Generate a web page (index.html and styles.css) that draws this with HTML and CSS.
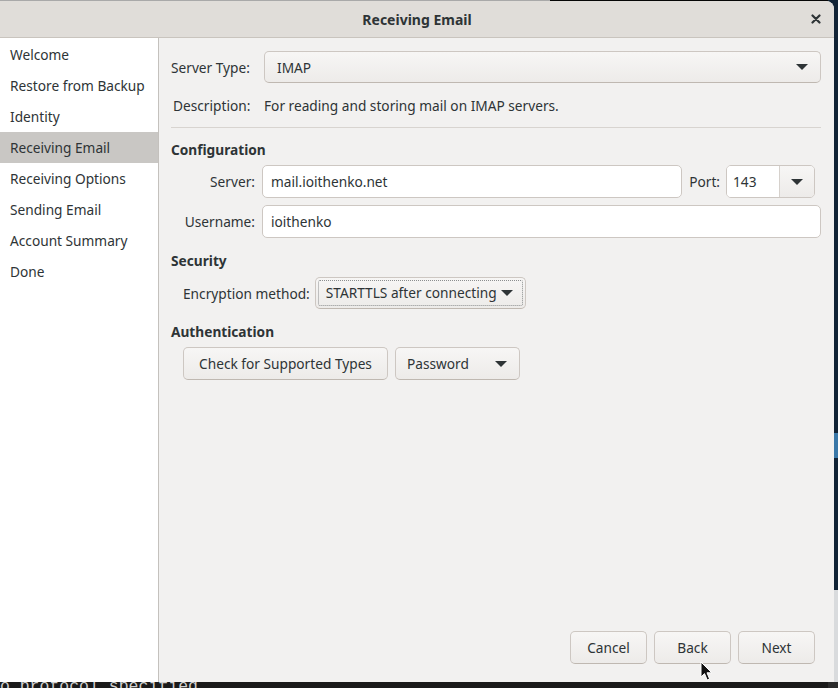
FILE: index.html
```html
<!DOCTYPE html>
<html>
<head>
<meta charset="utf-8">
<title>Receiving Email</title>
<link rel="stylesheet" href="styles.css">
</head>
<body>
<div class="desktop">
  <div class="side-strip"></div>
  <div class="terminal-text">No protocol specified</div>
  <div class="window">
    <header class="titlebar">
      <span class="title">Receiving Email</span>
      <span class="close">
        <svg width="10" height="10" viewBox="0 0 10 10"><path d="M1.5 1.5 L8.5 8.5 M8.5 1.5 L1.5 8.5" stroke="#2e3436" stroke-width="2.2" stroke-linecap="round"/></svg>
      </span>
    </header>
    <div class="main">
      <nav class="sidebar">
        <div class="nav-item">Welcome</div>
        <div class="nav-item">Restore from Backup</div>
        <div class="nav-item">Identity</div>
        <div class="nav-item selected">Receiving Email</div>
        <div class="nav-item">Receiving Options</div>
        <div class="nav-item">Sending Email</div>
        <div class="nav-item">Account Summary</div>
        <div class="nav-item">Done</div>
      </nav>
      <main class="content">
        <div class="row-type">
          <span class="top-label">Server Type:</span>
          <div class="btn combo combo-wide"><span>IMAP</span><span class="arrow"></span></div>
        </div>
        <div class="row-desc">
          <span class="top-label desc-label">Description:</span>
          <span>For reading and storing mail on IMAP servers.</span>
        </div>
        <div class="separator"></div>

        <div class="heading heading-first">Configuration</div>
        <div class="config-grid">
          <span class="field-label">Server:</span>
          <div class="server-line">
            <div class="entry entry-server">mail.ioithenko.net</div>
            <span class="port-label">Port:</span>
            <div class="port-combo">
              <div class="port-entry">143</div>
              <div class="port-btn"><span class="arrow"></span></div>
            </div>
          </div>
          <span class="field-label">Username:</span>
          <div class="entry">ioithenko</div>
        </div>

        <div class="heading">Security</div>
        <div class="indent-row enc-row">
          <span>Encryption method:</span>
          <div class="btn combo focused"><span>STARTTLS after connecting</span><span class="arrow"></span></div>
        </div>

        <div class="heading">Authentication</div>
        <div class="indent-row auth-row">
          <div class="btn btn-check">Check for Supported Types</div>
          <div class="btn combo combo-pass"><span>Password</span><span class="arrow"></span></div>
        </div>

        <div class="footer">
          <div class="btn btn-foot">Cancel</div>
          <div class="btn btn-foot">Back</div>
          <div class="btn btn-foot">Next</div>
        </div>
      </main>
    </div>
  </div>
  <svg class="cursor" width="13" height="21" viewBox="0 0 13 21">
    <path d="M1 1 L1 16 L4.5 12.6 L7.2 19 L9.6 18 L7 11.8 L11.8 11.8 Z" fill="#111" stroke="#fff" stroke-width="1" stroke-linejoin="round"/>
  </svg>
</div>
</body>
</html>
```

FILE: styles.css
```css
* { box-sizing: border-box; }

html, body {
  margin: 0;
  padding: 0;
}

body {
  width: 838px;
  height: 688px;
  overflow: hidden;
  font-family: "Noto Sans", "DejaVu Sans", sans-serif;
  font-size: 13.7px;
  color: #2e3436;
  background: #151515;
}

.desktop {
  position: relative;
  width: 838px;
  height: 688px;
  overflow: hidden;
  background:
    linear-gradient(to right, #a9a9a9 0, #a9a9a9 550px, #060606 550px) top left / 834px 1px no-repeat,
    #1a1a1a;
}

.side-strip {
  position: absolute;
  left: 828px;
  top: 0;
  width: 10px;
  height: 688px;
  background: linear-gradient(to bottom,
    #122436 0, #122436 433px,
    #3a78a8 433px, #3a78a8 458px,
    #122436 458px, #122436 590px,
    #d9dbdd 590px, #d9dbdd 682px,
    #2b2b2b 682px);
}

.terminal-text {
  position: absolute;
  left: -10px;
  top: 678px;
  font-family: "Liberation Mono", "DejaVu Sans Mono", monospace;
  font-size: 16.5px;
  line-height: 18px;
  color: #d0d0d0;
  white-space: pre;
}

.window {
  position: absolute;
  left: 0;
  top: 1px;
  width: 834px;
  height: 681px;
  border-top-right-radius: 8px;
  overflow: hidden;
  background: #f2f1f0;
  display: flex;
  flex-direction: column;
}

.titlebar {
  position: relative;
  flex: 0 0 37px;
  height: 37px;
  background: #e0ddd9;
  border-bottom: 1px solid #c9c4be;
  display: flex;
  align-items: center;
  justify-content: center;
}

.title {
  font-weight: bold;
  font-size: 14px;
}

.close {
  position: absolute;
  right: 13px;
  top: 13px;
  width: 10px;
  height: 10px;
  display: flex;
}

.main {
  flex: 1;
  display: flex;
  min-height: 0;
}

.sidebar {
  width: 159px;
  flex: 0 0 159px;
  background: #ffffff;
  border-right: 1px solid #c4c1bd;
  padding-top: 1px;
}

.nav-item {
  height: 31px;
  line-height: 31px;
  padding-left: 10px;
  white-space: nowrap;
}

.nav-item.selected {
  background: #c9c7c4;
}

.content {
  flex: 1;
  display: flex;
  flex-direction: column;
  padding: 13px 13px 18px 12px;
}

.row-type {
  display: flex;
  align-items: center;
  height: 32px;
}

.top-label {
  width: 93px;
  flex: 0 0 93px;
}

.desc-label {
  padding-left: 2px;
}

.row-desc {
  display: flex;
  align-items: center;
  height: 20px;
  margin-top: 12px;
}

.separator {
  height: 1px;
  background: #d8d4d0;
  margin-top: 12px;
}

.heading {
  font-weight: bold;
  height: 20px;
  line-height: 20px;
  margin-top: 13px;
}

.heading-first {
  margin-top: 12px;
}

.btn {
  display: flex;
  align-items: center;
  justify-content: center;
  background: linear-gradient(to bottom, #f7f6f5, #edebe9);
  border: 1px solid #cdc7c2;
  border-bottom-color: #bfb8b1;
  border-radius: 5px;
  white-space: nowrap;
}

.combo {
  justify-content: space-between;
}

.arrow {
  display: inline-block;
  width: 0;
  height: 0;
  border-left: 6px solid transparent;
  border-right: 6px solid transparent;
  border-top: 6px solid #2e3436;
}

.combo-wide {
  flex: 1;
  height: 32px;
  padding: 0 12px 0 12px;
}

.config-grid {
  display: grid;
  grid-template-columns: 72px 1fr;
  column-gap: 7px;
  row-gap: 7px;
  align-items: center;
  padding-left: 12px;
  margin-top: 5px;
}

.field-label {
  justify-self: end;
}

.entry {
  height: 33px;
  background: #ffffff;
  border: 1px solid #cdc7c2;
  border-radius: 5px;
  padding-left: 8px;
  display: flex;
  align-items: center;
}

.server-line {
  display: flex;
  align-items: center;
  padding-right: 6px;
}

.entry-server {
  flex: 1;
}

.port-label {
  margin-left: 7px;
  margin-right: 6px;
}

.port-combo {
  display: flex;
  width: 89px;
  height: 33px;
  border: 1px solid #cdc7c2;
  border-radius: 5px;
  overflow: hidden;
}

.port-entry {
  flex: 1;
  background: #ffffff;
  padding-left: 6px;
  display: flex;
  align-items: center;
}

.port-btn {
  width: 35px;
  flex: 0 0 35px;
  border-left: 1px solid #d6d1cc;
  background: linear-gradient(to bottom, #f7f6f5, #edebe9);
  display: flex;
  align-items: center;
  justify-content: center;
}

.indent-row {
  display: flex;
  align-items: center;
  padding-left: 12px;
  gap: 7px;
}

.enc-row {
  margin-top: 6px;
  gap: 5px;
}

.focused {
  flex: 0 0 211px;
  width: 211px;
  height: 32px;
  padding: 0 12px 1px 10px;
  outline: 1px dotted #8b8e8f;
  outline-offset: -4px;
}

.auth-row {
  margin-top: 5px;
}

.btn-check {
  width: 205px;
  height: 33px;
}

.combo-pass {
  width: 125px;
  height: 33px;
  padding: 0 12px 0 11px;
}

.footer {
  margin-top: auto;
  display: flex;
  justify-content: flex-end;
  gap: 7px;
  padding-right: 6px;
}

.btn-foot {
  width: 77px;
  height: 33px;
}

.cursor {
  position: absolute;
  left: 700px;
  top: 661px;
}
```
